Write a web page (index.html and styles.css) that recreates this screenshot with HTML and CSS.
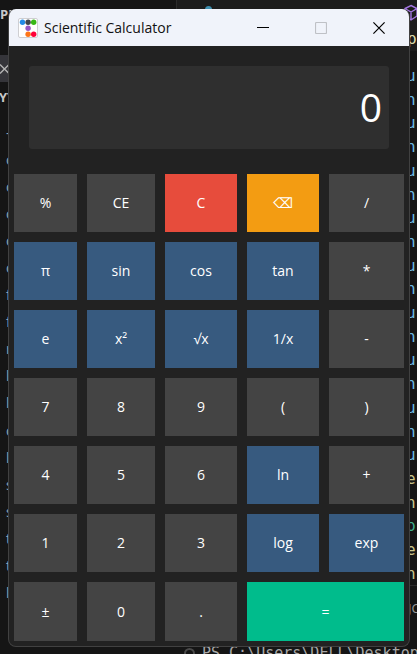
FILE: index.html
```html
<!DOCTYPE html>
<html lang="en">
<head>
<meta charset="utf-8">
<meta name="viewport" content="width=device-width, initial-scale=1">
<title>Scientific Calculator</title>
<link rel="stylesheet" href="styles.css">
</head>
<body>
<div class="desktop" aria-hidden="true">
  <div class="tab-bar"></div>
  <span class="side-title">PR</span>
  <div class="side-tab"><svg viewBox="0 0 10 10"><path d="m0 .5 9 9M9 .5l-9 9"/></svg></div>
  <span class="side-heading">YT</span>
  <div class="side-list"><span>-</span><span>c</span><span>c</span><span>c</span><span>c</span><span>c</span><span>f</span><span>f</span><span>r</span><span>l</span><span>l</span><span>c</span><span>l</span><span>s</span><span>s</span><span>t</span><span>t</span><span>l</span></div>
  <svg class="cube" viewBox="0 0 18 18"><path d="M9 1.5 15 4.5V12L9 16 3 12V4.5ZM3 4.5 9 8l6-3.5M9 8v8"/></svg>
  <span class="tab-dot"></span>
  <span class="crumb">pe</span>
  <div class="code"><span>u</span><span>n</span><span>u</span><span>n</span><span>u</span><span>n</span><span>u</span><span>n</span><span>u</span><span>n</span><span>u</span><span>n</span><span>u</span><span>n</span><span>u</span><span>n</span><span>u</span><span class="fn">e</span><span class="fn">n</span><span class="type">p</span><span class="fn">e</span><span class="fn">n</span></div>
  <div class="panel-edge"></div>
  <span class="panel-tab">JC</span>
  <div class="terminal"><span class="prompt-dot"></span>PS C:\Users\DELL\Desktop</div>
</div>
<main class="window">
  <header class="titlebar">
    <svg class="app-icon" viewBox="0 0 20 20" aria-hidden="true">
      <rect x=".5" y=".5" width="19" height="19" rx="1.5" fill="#fff" stroke="#cfcfd2"/>
      <circle cx="4.5" cy="4.2" r="2.7" fill="#228be6"/><circle cx="10.1" cy="4.2" r="2.7" fill="#40454b"/><circle cx="15.7" cy="4.2" r="2.7" fill="#37b815"/>
      <circle cx="10.1" cy="10.2" r="2.7" fill="#9557c4"/>
      <circle cx="10.1" cy="16.2" r="2.7" fill="#fd7518"/><circle cx="15.7" cy="16.2" r="2.7" fill="#ff0039"/>
    </svg>
    <h1 class="title">Scientific Calculator</h1>
    <div class="controls">
      <button type="button" class="control" aria-label="Minimize"><svg viewBox="0 0 12 12"><path d="M0 5.5h12"/></svg></button>
      <button type="button" class="control" aria-label="Maximize" disabled><svg viewBox="0 0 12 12"><rect x=".5" y=".5" width="11" height="11" rx="1"/></svg></button>
      <button type="button" class="control" aria-label="Close"><svg viewBox="0 0 12 12"><path d="m.4.4 11.2 11.2m0-11.2L.4 11.6"/></svg></button>
    </div>
  </header>
  <input class="display" type="text" value="0" aria-label="Result" readonly>
  <div class="keys">
    <button type="button" class="key">%</button>
    <button type="button" class="key">CE</button>
    <button type="button" class="key clear">C</button>
    <button type="button" class="key erase">⌫</button>
    <button type="button" class="key">/</button>
    <button type="button" class="key func">π</button>
    <button type="button" class="key func">sin</button>
    <button type="button" class="key func">cos</button>
    <button type="button" class="key func">tan</button>
    <button type="button" class="key">*</button>
    <button type="button" class="key func">e</button>
    <button type="button" class="key func">x²</button>
    <button type="button" class="key func">√x</button>
    <button type="button" class="key func">1/x</button>
    <button type="button" class="key">-</button>
    <button type="button" class="key">7</button>
    <button type="button" class="key">8</button>
    <button type="button" class="key">9</button>
    <button type="button" class="key">(</button>
    <button type="button" class="key">)</button>
    <button type="button" class="key">4</button>
    <button type="button" class="key">5</button>
    <button type="button" class="key">6</button>
    <button type="button" class="key func">ln</button>
    <button type="button" class="key">+</button>
    <button type="button" class="key">1</button>
    <button type="button" class="key">2</button>
    <button type="button" class="key">3</button>
    <button type="button" class="key func">log</button>
    <button type="button" class="key func">exp</button>
    <button type="button" class="key">±</button>
    <button type="button" class="key">0</button>
    <button type="button" class="key">.</button>
    <button type="button" class="key equals">=</button>
  </div>
</main>
</body>
</html>
```
FILE: styles.css
```css
* { box-sizing: border-box; }

body {
  margin: 0;
  padding: 9px 7px 7px 8px;
  position: relative;
  min-height: 100vh;
  background: #151515;
  font-family: "Open Sans", "Noto Sans", "DejaVu Sans", sans-serif;
}

/* Editor visible behind the calculator */
.desktop {
  position: absolute;
  inset: 0;
  overflow: hidden;
  color: #9a9a9a;
  font-size: 14px;
  line-height: 20px;
}
.desktop > * { position: absolute; }
.tab-bar { top: 0; left: 176px; right: 0; height: 51px; background: #1c1c1c; border-left: 1px solid #2b2b2b; }
.side-title { top: 4px; left: 0; font-weight: 700; color: #c8c8c8; font-size: 13px; }
.side-tab { top: 55px; left: 0; width: 10px; height: 27px; display: flex; align-items: center; background: #35353a; }
.side-tab svg { width: 10px; height: 10px; fill: none; stroke: #b4b4b4; stroke-width: 1.4; }
.side-heading { top: 87px; left: -1px; font-weight: 700; color: #c8c8c8; font-size: 13px; }
.side-list { top: 123px; left: 6px; height: 480px; display: flex; flex-direction: column; justify-content: space-between; color: #8fa6b8; }
.cube { top: 4px; left: 402px; width: 18px; height: 18px; fill: none; stroke: #a375e0; stroke-width: 1.4; }
.tab-dot { top: 6px; left: 205px; width: 7px; height: 7px; border-radius: 50%; background: #3e8fb0; }
.crumb { top: 29px; left: 407px; color: #dcdcaa; font: 16px/20px "DejaVu Sans Mono", monospace; }
.code {
  top: 66px; left: 406px; height: 518px;
  display: flex; flex-direction: column; justify-content: space-between;
  color: #6bb8e0; font: 16px/20px "DejaVu Sans Mono", monospace;
}
.fn { color: #c9c58b; }
.type { color: #3fae8c; }
.panel-edge { top: 585px; left: 176px; right: 0; height: 1px; background: #2b2b2b; }
.panel-tab { top: 598px; left: 408px; font-size: 13px; }
.terminal {
  top: 643px; left: 184px; white-space: pre; display: flex; align-items: center; gap: 7px;
  color: #a8a8a8; font: 15px/20px "DejaVu Sans Mono", monospace;
}
.prompt-dot { width: 11px; height: 11px; border: 2px solid #4a4a4a; border-radius: 50%; }

.window {
  position: relative;
  overflow: hidden;
  border: 1px solid #414141;
  border-top: 0;
  border-radius: 8px;
  background: #222;
}

.titlebar {
  display: flex;
  align-items: center;
  gap: 6px;
  height: 37px;
  padding: 0 1px 0 9px;
  background: #f0f3fa;
}
.app-icon { width: 20px; height: 20px; }
.title { margin: 0; font-size: 14px; font-weight: 400; line-height: 20px; color: #111; }
.controls { display: flex; align-self: stretch; margin-left: auto; }
.control {
  display: flex; align-items: center; justify-content: center;
  width: 58px; padding: 0; border: 0; background: none; color: #000;
}
.control svg { width: 12px; height: 12px; fill: none; stroke: currentColor; stroke-width: 1.2; }
.control:disabled { color: #bfc1c6; }

.display {
  display: block;
  width: calc(100% - 40px);
  height: 83px;
  margin: 20px;
  padding: 0 7px 2px;
  border: 0;
  border-radius: 3px;
  background: #2f2f2f;
  color: #fff;
  font: 500 39px/80px "Open Sans", sans-serif;
  text-align: right;
}

.keys {
  display: grid;
  grid-template-columns: 63fr 68fr 72fr 72fr 75fr;
  grid-template-rows: repeat(6, 58px) 59px;
  gap: 10px;
  padding: 5px;
}
.key {
  padding: 0; border: 0;
  background: #444; color: #fff;
  font: 14px/20px "Open Sans", "Noto Sans", "DejaVu Sans", sans-serif;
}
.func { background: #375a7f; }
.clear { background: #e74c3c; }
.erase { background: #f39c12; }
.equals { grid-column: span 2; background: #00bc8c; }
```
